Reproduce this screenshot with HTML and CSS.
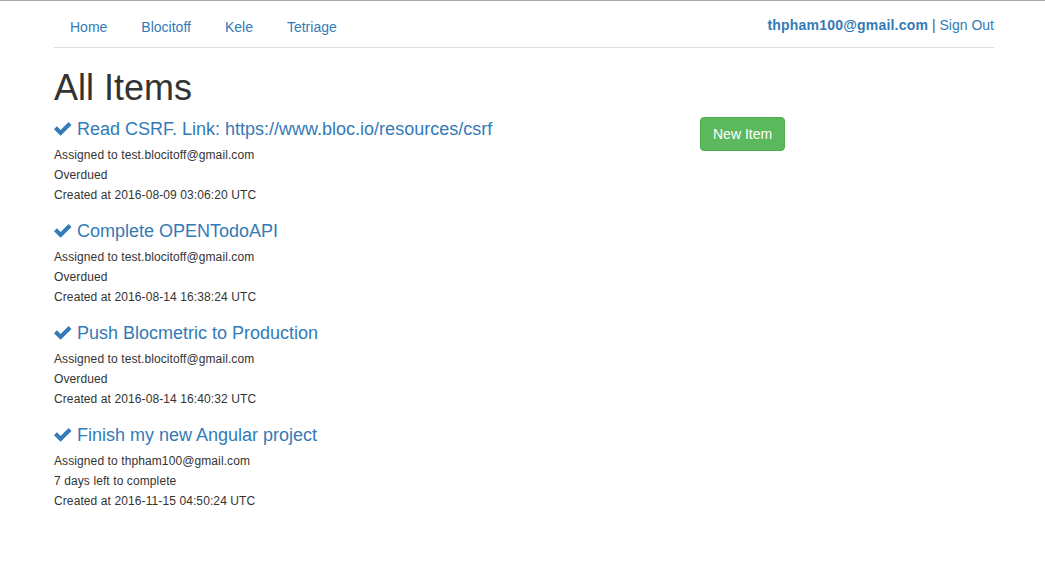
FILE: index.html
```html
<!DOCTYPE html>
<html>
<head>
<meta charset="utf-8">
<title>All Items</title>
<link rel="stylesheet" href="styles.css">
</head>
<body>
<div class="container">
  <header class="topnav">
    <ul class="nav">
      <li><a href="#">Home</a></li>
      <li><a href="#">Blocitoff</a></li>
      <li><a href="#">Kele</a></li>
      <li><a href="#">Tetriage</a></li>
    </ul>
    <div class="user">
      <a href="#" class="email">thpham100@gmail.com</a> | <a href="#">Sign Out</a>
    </div>
  </header>

  <h1>All Items</h1>

  <div class="row">
    <div class="items">
      <div class="item">
        <h4><svg class="check" viewBox="0 0 18 14" width="18" height="14"><polygon points="0,7.2 2.9,4.3 6.6,8 14.6,0 17.5,2.9 6.6,13.8"/></svg> <a href="#">Read CSRF. Link: https://www.bloc.io/resources/csrf</a></h4>
        <div class="meta">Assigned to test.blocitoff@gmail.com</div>
        <div class="meta">Overdued</div>
        <div class="meta">Created at 2016-08-09 03:06:20 UTC</div>
      </div>
      <div class="item">
        <h4><svg class="check" viewBox="0 0 18 14" width="18" height="14"><polygon points="0,7.2 2.9,4.3 6.6,8 14.6,0 17.5,2.9 6.6,13.8"/></svg> <a href="#">Complete OPENTodoAPI</a></h4>
        <div class="meta">Assigned to test.blocitoff@gmail.com</div>
        <div class="meta">Overdued</div>
        <div class="meta">Created at 2016-08-14 16:38:24 UTC</div>
      </div>
      <div class="item">
        <h4><svg class="check" viewBox="0 0 18 14" width="18" height="14"><polygon points="0,7.2 2.9,4.3 6.6,8 14.6,0 17.5,2.9 6.6,13.8"/></svg> <a href="#">Push Blocmetric to Production</a></h4>
        <div class="meta">Assigned to test.blocitoff@gmail.com</div>
        <div class="meta">Overdued</div>
        <div class="meta">Created at 2016-08-14 16:40:32 UTC</div>
      </div>
      <div class="item">
        <h4><svg class="check" viewBox="0 0 18 14" width="18" height="14"><polygon points="0,7.2 2.9,4.3 6.6,8 14.6,0 17.5,2.9 6.6,13.8"/></svg> <a href="#">Finish my new Angular project</a></h4>
        <div class="meta">Assigned to thpham100@gmail.com</div>
        <div class="meta">7 days left to complete</div>
        <div class="meta">Created at 2016-11-15 04:50:24 UTC</div>
      </div>
    </div>
    <div class="actions">
      <a href="#" class="btn">New Item</a>
    </div>
  </div>
</div>
</body>
</html>
```

FILE: styles.css
```css
html, body {
  margin: 0;
  padding: 0;
}
body {
  border-top: 1px solid #a9a9a9;
  font-family: "Liberation Sans", Arial, Helvetica, sans-serif;
  font-size: 14px;
  line-height: 20px;
  color: #333;
  background: #fff;
}
a {
  color: #337ab7;
  text-decoration: none;
}
.container {
  width: 940px;
  margin: 0 54px;
}
.topnav {
  display: flex;
  justify-content: space-between;
  align-items: flex-start;
  padding-top: 6px;
  border-bottom: 1px solid #ddd;
}
.nav {
  display: flex;
  list-style: none;
  margin: 0;
  padding: 0 0 0 1px;
}
.nav li {
  margin-right: 4px;
}
.nav a {
  display: block;
  padding: 10px 15px;
  line-height: 20px;
}
.user {
  padding-top: 8px;
  color: #555;
}
.user .email {
  font-weight: bold;
  letter-spacing: 0.2px;
}
h1 {
  font-size: 36px;
  font-weight: normal;
  line-height: 40px;
  margin: 20px 0 9px;
  color: #333;
}
.row {
  display: grid;
  grid-template-columns: 616px auto;
  column-gap: 30px;
  align-items: start;
}
.items {
  padding-top: 2px;
}
.item {
  margin-bottom: 16px;
}
.item h4 {
  font-size: 18px;
  font-weight: normal;
  line-height: 20px;
  margin: 0 0 6px;
  display: flex;
  align-items: center;
  gap: 5px;
}
.check {
  fill: #337ab7;
  flex: none;
  margin-top: -1px;
}
.meta {
  font-size: 12px;
  line-height: 20px;
  letter-spacing: 0.1px;
}
.actions {
  display: flex;
}
.btn {
  display: inline-block;
  padding: 6px 12px;
  font-size: 14px;
  line-height: 20px;
  color: #fff;
  background: #5cb85c;
  border: 1px solid #4cae4c;
  border-radius: 4px;
}
```
